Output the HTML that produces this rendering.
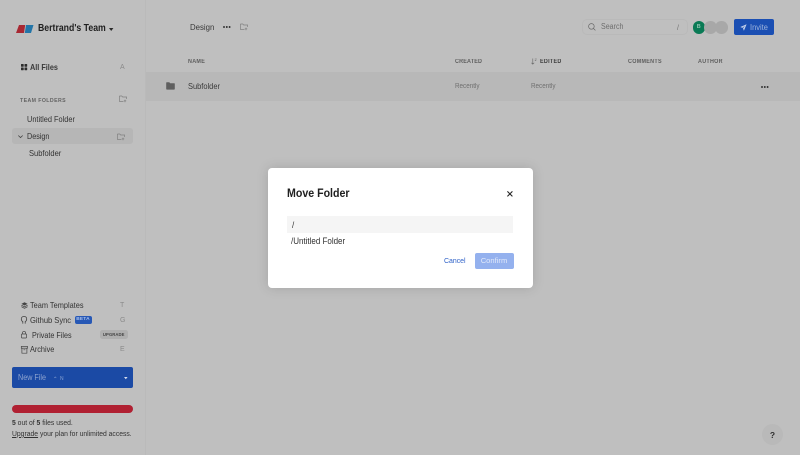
<!DOCTYPE html>
<html lang="en">
<head>
<meta charset="utf-8">
<title>Move Folder</title>
<style>
html,body{margin:0;padding:0;width:800px;height:455px;overflow:hidden;background:#bfbfbf}
body{font-family:"Liberation Sans",sans-serif;color:#242424;position:relative}
.t{position:absolute;white-space:nowrap;line-height:14px;transform:scaleX(.9);transform-origin:0 0}
.c{transform:none}
.b{position:absolute}
svg{position:absolute;overflow:visible}
.soft{filter:blur(.35px)}
.hd{font-size:6px;letter-spacing:.33px;color:#5e5e5e;font-weight:bold}
.key{font-size:7px;color:#8a8a8a;transform:none}
.nav{color:#333}
</style>
</head>
<body>
<div class="b soft" style="left:0;top:0;width:800px;height:455px">
<!-- Sidebar divider -->
<div class="b" style="left:145px;top:0;width:1px;height:455px;background:#bababa"></div>

<!-- Logo -->
<svg style="left:16px;top:24px" width="18" height="10" viewBox="0 0 18 10">
<polygon points="3,1 9.2,1 8,9 0,9" fill="#a82832"/>
<polygon points="10,1 17.5,1 15,9 8.8,9" fill="#2375a8"/>
</svg>
<div class="t" style="left:38px;top:22px;font-size:9.7px;font-weight:bold;color:#1f1f1f">Bertrand's Team</div>
<svg style="left:109px;top:28px" width="5" height="4"><polygon points="0,0 4.4,0 2.2,3" fill="#2a2a2a"/></svg>

<!-- All Files -->
<svg style="left:21px;top:64px" width="6" height="6"><rect x="0" y="0" width="2.7" height="2.7" rx=".5" fill="#2d2d2d"/><rect x="3.5" y="0" width="2.7" height="2.7" rx=".5" fill="#2d2d2d"/><rect x="0" y="3.5" width="2.7" height="2.7" rx=".5" fill="#2d2d2d"/><rect x="3.5" y="3.5" width="2.7" height="2.7" rx=".5" fill="#2d2d2d"/></svg>
<div class="t" style="left:30px;top:61px;font-size:8.1px;font-weight:bold;color:#3a3a3a">All Files</div>
<div class="t key" style="left:120px;top:60.5px">A</div>

<!-- Team folders -->
<div class="t" style="left:20px;top:93.5px;font-size:5.8px;letter-spacing:.45px;color:#646464;font-weight:bold">TEAM FOLDERS</div>
<svg style="left:119px;top:95px" width="8" height="8" viewBox="0 0 8 8" fill="none" stroke="#808080" stroke-width=".7"><path d="M.4 1h2.4l.8 1h4v2M.4 1v5.4h4"/><path d="M6 4.6v2.6M4.8 5.9h2.4"/></svg>
<div class="t nav" style="left:26.5px;top:113px;font-size:8.2px">Untitled Folder</div>
<div class="b" style="left:12px;top:128px;width:121px;height:16px;background:#b6b6b6;border-radius:3px"></div>
<svg style="left:17.5px;top:134.5px" width="5" height="4" fill="none" stroke="#444" stroke-width=".8"><path d="M.3.5l2.2 2.1L4.7.5"/></svg>
<div class="t nav" style="left:26.5px;top:130px;font-size:8px">Design</div>
<svg style="left:117px;top:133px" width="8" height="8" viewBox="0 0 8 8" fill="none" stroke="#808080" stroke-width=".7"><path d="M.4 1h2.4l.8 1h4v2M.4 1v5.4h4"/><path d="M6 4.6v2.6M4.8 5.9h2.4"/></svg>
<div class="t nav" style="left:29px;top:146px;font-size:8.4px">Subfolder</div>

<!-- Bottom nav -->
<svg style="left:20.5px;top:301.5px" width="7" height="7" viewBox="0 0 7 7"><path d="M3.5.3L6.6 1.9 3.5 3.5.4 1.9z" fill="#444"/><path d="M.4 3.2l3.1 1.6 3.1-1.6M.4 4.7l3.1 1.6 3.1-1.6" fill="none" stroke="#444" stroke-width=".8"/></svg>
<div class="t nav" style="left:30px;top:299px;font-size:8.2px">Team Templates</div>
<div class="t key" style="left:120px;top:298.5px">T</div>

<svg style="left:21px;top:316px" width="6" height="8" viewBox="0 0 6 8" fill="none" stroke="#444" stroke-width=".8"><path d="M1.8 7.6V5.6C.6 5 .3 4.2.3 3 .3 1.3 1.3.5 3 .5s2.7.8 2.7 2.5c0 1.2-.3 2-1.5 2.6v2"/></svg>
<div class="t nav" style="left:30px;top:313px;font-size:8.4px">Github Sync</div>
<div class="b" style="left:74.5px;top:316px;width:17px;height:8px;background:#2758b5;border-radius:2px"></div>
<div class="t c" style="left:74.5px;top:316px;width:17px;text-align:center;font-size:4.8px;line-height:8px;font-weight:bold;color:#a9c0ea;letter-spacing:.2px">BETA</div>
<div class="t key" style="left:120px;top:313.5px">G</div>

<svg style="left:21px;top:330.5px" width="6" height="8" viewBox="0 0 6 8" fill="none" stroke="#444" stroke-width=".7"><rect x=".4" y="3" width="5.2" height="4" rx=".7"/><path d="M1.5 3V1.8a1.5 1.5 0 0 1 3 0V3"/></svg>
<div class="t nav" style="left:31.5px;top:329px;font-size:8px">Private Files</div>
<div class="b" style="left:100px;top:330px;width:27.5px;height:9px;background:#afafaf;border-radius:2.5px"></div>
<div class="t c" style="left:100px;top:330px;width:27.5px;text-align:center;font-size:4.2px;line-height:9px;font-weight:bold;color:#444;letter-spacing:.1px">UPGRADE</div>

<svg style="left:20.5px;top:345.5px" width="7" height="8" viewBox="0 0 7 8" fill="none" stroke="#444" stroke-width=".7"><rect x=".3" y=".4" width="6.2" height="1.8"/><path d="M.9 2.2v5h5v-5M2.5 3.8h1.8"/></svg>
<div class="t nav" style="left:30px;top:343px;font-size:8.1px">Archive</div>
<div class="t key" style="left:120px;top:342.5px">E</div>

<!-- New file -->
<div class="b" style="left:12px;top:367px;width:121px;height:21px;background:#1b4aa5;border-radius:2px"></div>
<div class="t" style="left:18px;top:371px;font-size:8px;color:#8fa5d0">New File</div>
<div class="t" style="left:53px;top:373px;font-size:6px;color:#86a0d2">⌃</div>
<div class="t" style="left:59.5px;top:372px;font-size:5.5px;color:#86a0d2">N</div>
<svg style="left:124px;top:377px" width="4" height="3"><polygon points="0,0 3.6,0 1.8,2.2" fill="#d5ddee"/></svg>

<!-- Usage -->
<div class="b" style="left:12px;top:405px;width:121px;height:8px;background:#b02032;border-radius:4px"></div>
<div class="t" style="left:12px;top:416px;font-size:7.55px;color:#333"><b>5</b> out of <b>5</b> files used.</div>
<div class="t" style="left:12px;top:427px;font-size:7.55px;color:#333"><u>Upgrade</u> your plan for unlimited access.</div>

<!-- Top bar -->
<div class="t" style="left:190px;top:20px;font-size:8.7px;color:#3a3a3a">Design</div>
<svg style="left:223px;top:26px" width="8" height="3"><circle cx="1" cy="1" r=".95" fill="#2f2f2f"/><circle cx="3.8" cy="1" r=".95" fill="#2f2f2f"/><circle cx="6.6" cy="1" r=".95" fill="#2f2f2f"/></svg>
<svg style="left:240px;top:23px" width="8" height="8" viewBox="0 0 8 8" fill="none" stroke="#808080" stroke-width=".7"><path d="M.4 1h2.4l.8 1h4v2M.4 1v5.4h4"/><path d="M6 4.6v2.6M4.8 5.9h2.4"/></svg>

<!-- Search -->
<div class="b" style="left:581.5px;top:19px;width:106px;height:15.5px;border:1px solid #b9b9b9;border-radius:5px;box-sizing:border-box"></div>
<svg style="left:588px;top:23px" width="8" height="8" viewBox="0 0 8 8" fill="none" stroke="#666" stroke-width=".7"><circle cx="3.4" cy="3.4" r="2.8"/><path d="M5.5 5.5L7.4 7.4"/></svg>
<div class="t" style="left:601px;top:20px;font-size:7.9px;color:#6f6f6f">Search</div>
<div class="t" style="left:676.5px;top:20.5px;font-size:7.5px;color:#6f6f6f">/</div>

<!-- Avatars -->
<div class="b" style="left:692.7px;top:21px;width:12.5px;height:12.5px;border-radius:50%;background:#0a7a55"></div>
<div class="t c" style="left:692.7px;top:21px;width:12px;text-align:center;font-size:5.5px;line-height:12.5px;color:#8fc4b0;font-weight:bold">B</div>
<div class="b" style="left:704px;top:21px;width:12.5px;height:12.5px;border-radius:50%;background:#a8a8a8"></div>
<div class="b" style="left:715px;top:21px;width:12.5px;height:12.5px;border-radius:50%;background:#a8a8a8"></div>

<!-- Invite -->
<div class="b" style="left:734px;top:19px;width:39.5px;height:15.5px;background:#1b4fb3;border-radius:2px"></div>
<svg style="left:740px;top:23.5px" width="7" height="7" viewBox="0 0 7 7"><path d="M6.6.3L.3 3l2.1.9L5 1.6 3 4.4l.9 2.3z" fill="#c3d0e9"/></svg>
<div class="t" style="left:749.5px;top:20px;font-size:8.3px;color:#9db3dc">Invite</div>

<!-- Table header -->
<div class="t hd" style="left:188px;top:55px">NAME</div>
<div class="t hd" style="left:455px;top:55px;letter-spacing:.22px">CREATED</div>
<svg style="left:531px;top:58px" width="6" height="7" viewBox="0 0 6 7" fill="none" stroke="#666" stroke-width=".6"><path d="M1.8.5v5.6M.4 4.8l1.4 1.4 1.4-1.4M3.8 1h2M3.8 2.6h1.4"/></svg>
<div class="t hd" style="left:540px;top:55px;color:#3f3f3f">EDITED</div>
<div class="t hd" style="left:627.5px;top:55px">COMMENTS</div>
<div class="t hd" style="left:698px;top:55px">AUTHOR</div>

<!-- Row -->
<div class="b" style="left:146px;top:72px;width:654px;height:29px;background:#b8b8b8"></div>
<svg style="left:166px;top:82px" width="9" height="8" viewBox="0 0 9 8"><path d="M.2.9q0-.6.6-.6h2.5l.9 1h4q.6 0 .6.6v5q0 .7-.7.7H.9q-.7 0-.7-.7z" fill="#5f5f5f"/></svg>
<div class="t" style="left:188px;top:79px;font-size:8.3px;color:#3a3a3a">Subfolder</div>
<div class="t" style="left:454.5px;top:80px;font-size:7px;color:#6f6f6f">Recently</div>
<div class="t" style="left:530.5px;top:80px;font-size:7px;color:#6f6f6f">Recently</div>
<svg style="left:761px;top:85.5px" width="8" height="3"><circle cx="1" cy="1" r=".95" fill="#2f2f2f"/><circle cx="3.8" cy="1" r=".95" fill="#2f2f2f"/><circle cx="6.6" cy="1" r=".95" fill="#2f2f2f"/></svg>

<!-- Help -->
<div class="b" style="left:762px;top:424px;width:21px;height:21px;border-radius:50%;background:#b9b9b9"></div>
<div class="t c" style="left:762px;top:428px;width:21px;text-align:center;font-size:8.5px;font-weight:bold;color:#2f2f2f">?</div>

<!-- Modal -->
<div class="b" style="left:267.5px;top:167.5px;width:265px;height:120px;background:#fff;border-radius:4px;box-shadow:0 0 12px rgba(0,0,0,.14)"></div>
<div class="t" style="left:287px;top:186px;font-size:11.8px;font-weight:bold;color:#202020">Move Folder</div>
<svg style="left:507px;top:191px" width="6" height="6" fill="none" stroke="#222" stroke-width="1.05"><path d="M.4.4l5 5M5.4.4l-5 5"/></svg>
<div class="b" style="left:287px;top:216px;width:226px;height:16.5px;background:#f5f5f5"></div>
<div class="t" style="left:291.5px;top:217.5px;font-size:8.9px;color:#303030">/</div>
<div class="t" style="left:291px;top:234px;font-size:8.9px;color:#303030">/Untitled Folder</div>
<div class="t" style="left:444px;top:253.5px;font-size:7.7px;color:#2f62c8">Cancel</div>
<div class="b" style="left:474.5px;top:252.5px;width:39px;height:16px;background:#94b1ee;border-radius:2px"></div>
<div class="t c" style="left:474.5px;top:253.5px;width:39px;text-align:center;font-size:7.6px;color:#e1e9fa">Confirm</div>
</div>
</body>
</html>
